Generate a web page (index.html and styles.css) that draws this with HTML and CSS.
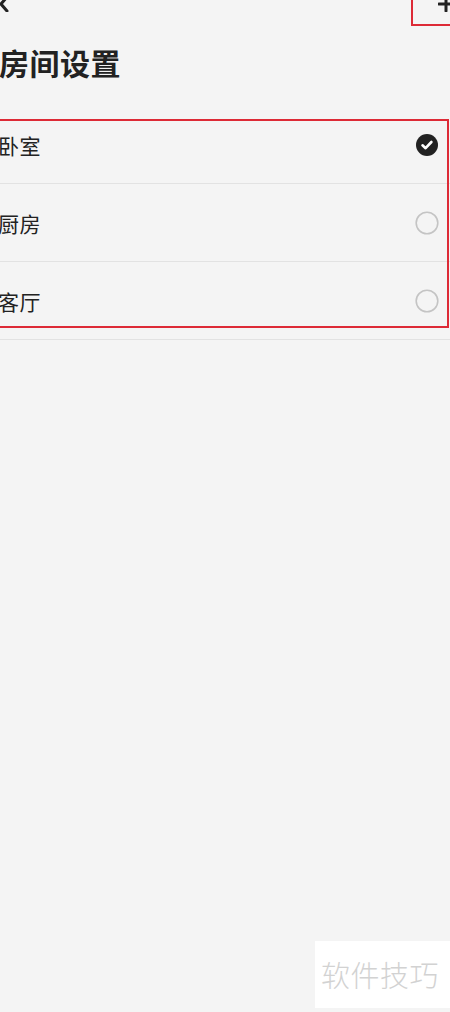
FILE: index.html
```html
<!DOCTYPE html>
<html>
<head>
    <meta charset="utf-8">
    <title>房间设置</title>
    <link rel="stylesheet" href="styles.css">
</head>
<body>
    <div class="page">
        <div class="header">
            <svg class="back" width="10" height="16" viewBox="0 0 10 16">
                <path d="M8 1 L2 8 L8 15" fill="none" stroke="#222" stroke-width="3" stroke-linecap="round" stroke-linejoin="round"/>
            </svg>
            <svg class="plus" width="16" height="16" viewBox="0 0 16 16">
                <path d="M8 1 V15 M1 8 H15" stroke="#222" stroke-width="3" stroke-linecap="round"/>
            </svg>
        </div>

        <h1 class="title">房间设置</h1>

        <ul class="room-list">
            <li class="room">
                <span class="room-name">卧室</span>
                <svg class="radio" width="24" height="24" viewBox="0 0 24 24">
                    <circle cx="12" cy="12" r="11" fill="#222"/>
                    <path d="M7.5 12.3 L10.6 15.2 L16.4 9" fill="none" stroke="#fff" stroke-width="2.6" stroke-linecap="round" stroke-linejoin="round"/>
                </svg>
            </li>
            <li class="room">
                <span class="room-name">厨房</span>
                <svg class="radio" width="24" height="24" viewBox="0 0 24 24">
                    <circle cx="12" cy="12" r="10.8" fill="none" stroke="#c4c4c4" stroke-width="1.6"/>
                </svg>
            </li>
            <li class="room">
                <span class="room-name">客厅</span>
                <svg class="radio" width="24" height="24" viewBox="0 0 24 24">
                    <circle cx="12" cy="12" r="10.8" fill="none" stroke="#c4c4c4" stroke-width="1.6"/>
                </svg>
            </li>
        </ul>

        <!-- annotation boxes drawn over the screenshot -->
        <div class="mark mark-list"></div>
        <div class="mark mark-add"></div>

        <div class="watermark">软件技巧</div>
    </div>
</body>
</html>
```

FILE: styles.css
```css
html, body {
    margin: 0;
    padding: 0;
    background-color: #f4f4f4;
}

body {
    font-family: "Noto Sans CJK SC", "Noto Sans", sans-serif;
    color: #222;
    overflow: hidden;
}

.page {
    position: relative;
    width: 450px;
    height: 1012px;
}

.header {
    display: flex;
    justify-content: space-between;
    align-items: center;
    height: 16px;
    margin-top: -4px;
}

.back {
    display: block;
    margin-left: -1px;
}

.plus {
    display: block;
    margin-right: -4px;
}

.title {
    margin: 30px 0 0 -1px;
    font-size: 30px;
    line-height: 40px;
    font-weight: bold;
    letter-spacing: 0.5px;
}

.room-list {
    list-style: none;
    margin: 24px 0 0 0;
    padding: 0;
}

.room {
    display: flex;
    align-items: center;
    justify-content: space-between;
    height: 77px;
    border-bottom: 1px solid #e2e2e2;
    padding-right: 11px;
}

.room-name {
    font-size: 21px;
    margin-left: -2px;
    letter-spacing: 0.5px;
}

.radio {
    display: block;
}

.mark {
    position: absolute;
    border: 2px solid #dd2a36;
    box-sizing: border-box;
}

.mark-list {
    left: -4px;
    top: 123px;
    width: 453px;
    height: 209px;
}

.mark-add {
    left: 411px;
    top: -4px;
    width: 48px;
    height: 34px;
}

.watermark {
    position: absolute;
    left: 315px;
    top: 945px;
    width: 135px;
    height: 67px;
    background-color: #fff;
    color: #d2d2d2;
    font-size: 29px;
    font-weight: 300;
    line-height: 67px;
    padding-left: 6px;
    box-sizing: border-box;
    letter-spacing: 0.5px;
}
```
